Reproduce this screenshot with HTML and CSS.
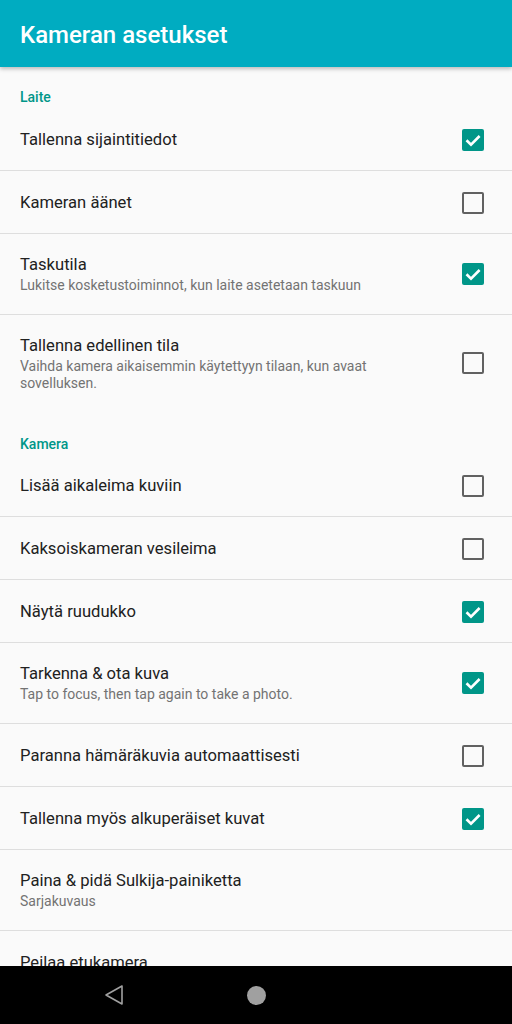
FILE: index.html
```html
<!DOCTYPE html>
<html lang="fi">
<head>
  <meta charset="UTF-8">
  <meta name="viewport" content="width=device-width, initial-scale=1.0">
  <title>Kameran asetukset</title>
  <link rel="stylesheet" href="styles.css">
</head>
<body>
  <div class="screen">
    <div class="appbar">Kameran asetukset</div>

    <div class="list">
      <div class="category">Laite</div>
      <div class="pref single">
        <div class="text"><div class="title">Tallenna sijaintitiedot</div></div>
        <div class="check on"><svg viewBox="0 0 22 22"><path d="M4.5 11.2 L9 15.6 L17.6 7"/></svg></div>
      </div>
      <div class="pref single">
        <div class="text"><div class="title">Kameran äänet</div></div>
        <div class="check"></div>
      </div>
      <div class="pref">
        <div class="text">
          <div class="title">Taskutila</div>
          <div class="summary">Lukitse kosketustoiminnot, kun laite asetetaan taskuun</div>
        </div>
        <div class="check on"><svg viewBox="0 0 22 22"><path d="M4.5 11.2 L9 15.6 L17.6 7"/></svg></div>
      </div>
      <div class="pref last">
        <div class="text">
          <div class="title">Tallenna edellinen tila</div>
          <div class="summary">Vaihda kamera aikaisemmin käytettyyn tilaan, kun avaat sovelluksen.</div>
        </div>
        <div class="check"></div>
      </div>

      <div class="category next">Kamera</div>
      <div class="pref single">
        <div class="text"><div class="title">Lisää aikaleima kuviin</div></div>
        <div class="check"></div>
      </div>
      <div class="pref single">
        <div class="text"><div class="title">Kaksoiskameran vesileima</div></div>
        <div class="check"></div>
      </div>
      <div class="pref single">
        <div class="text"><div class="title">Näytä ruudukko</div></div>
        <div class="check on"><svg viewBox="0 0 22 22"><path d="M4.5 11.2 L9 15.6 L17.6 7"/></svg></div>
      </div>
      <div class="pref">
        <div class="text">
          <div class="title">Tarkenna &amp; ota kuva</div>
          <div class="summary">Tap to focus, then tap again to take a photo.</div>
        </div>
        <div class="check on"><svg viewBox="0 0 22 22"><path d="M4.5 11.2 L9 15.6 L17.6 7"/></svg></div>
      </div>
      <div class="pref single">
        <div class="text"><div class="title">Paranna hämäräkuvia automaattisesti</div></div>
        <div class="check"></div>
      </div>
      <div class="pref single">
        <div class="text"><div class="title">Tallenna myös alkuperäiset kuvat</div></div>
        <div class="check on"><svg viewBox="0 0 22 22"><path d="M4.5 11.2 L9 15.6 L17.6 7"/></svg></div>
      </div>
      <div class="pref">
        <div class="text">
          <div class="title">Paina &amp; pidä Sulkija-painiketta</div>
          <div class="summary">Sarjakuvaus</div>
        </div>
      </div>
      <div class="pref single">
        <div class="text"><div class="title">Peilaa etukamera</div></div>
      </div>
    </div>

    <div class="navbar">
      <div class="nav-btn">
        <svg viewBox="0 0 24 24" width="24" height="24"><path class="back" d="M20 3 L20 21 L4 12 Z"/></svg>
      </div>
      <div class="nav-btn"><div class="home"></div></div>
      <div class="nav-btn"></div>
    </div>
  </div>
</body>
</html>
```

FILE: styles.css
```css
* { box-sizing: border-box; margin: 0; padding: 0; }
body {
  font-family: Roboto, 'Noto Sans', sans-serif;
  background: #fafafa;
  color: #212121;
}
.screen {
  height: 1024px;
  display: flex;
  flex-direction: column;
  overflow: hidden;
}
.appbar {
  height: 67px;
  flex-shrink: 0;
  background: #00acc1;
  color: #fff;
  font-size: 24px;
  font-weight: 500;
  display: flex;
  align-items: center;
  padding: 3px 20px 0;
  box-shadow: 0 2px 4px rgba(0,0,0,0.25);
  position: relative;
  z-index: 2;
}
.list {
  flex: 1;
  overflow: hidden;
}
.category {
  height: 41px;
  padding: 20px 20px 0;
  line-height: 20px;
  font-size: 14px;
  font-weight: 500;
  color: #009688;
}
.category.next { height: 40px; }
.pref {
  display: flex;
  align-items: center;
  padding: 19px 28px 20px 20px;
  border-bottom: 1px solid #dedede;
}
.pref.single { padding: 20px 28px 18px 20px; }
.pref.last {
  border-bottom: none;
  padding-bottom: 22px;
}
.text {
  flex: 1;
  padding-right: 24px;
}
.title {
  font-size: 16.6px;
  line-height: 24px;
  color: #212121;
}
.summary {
  font-size: 14px;
  line-height: 17px;
  color: #737373;
}
.check {
  width: 22px;
  height: 22px;
  flex-shrink: 0;
  border: 2px solid #616161;
  border-radius: 2px;
}
.check.on {
  background: #009688;
  border: none;
}
.check svg {
  display: block;
  width: 22px;
  height: 22px;
}
.check svg path {
  fill: none;
  stroke: #fff;
  stroke-width: 2.6;
}
.navbar {
  height: 58px;
  flex-shrink: 0;
  background: #000;
  display: flex;
  justify-content: center;
  align-items: center;
  gap: 118px;
}
.nav-btn {
  width: 24px;
  height: 24px;
  display: flex;
  align-items: center;
  justify-content: center;
}
.nav-btn svg .back {
  fill: none;
  stroke: #a0a0a0;
  stroke-width: 1.6;
  stroke-linejoin: round;
}
.home {
  width: 19px;
  height: 19px;
  border-radius: 50%;
  background: #a0a0a0;
}
```
